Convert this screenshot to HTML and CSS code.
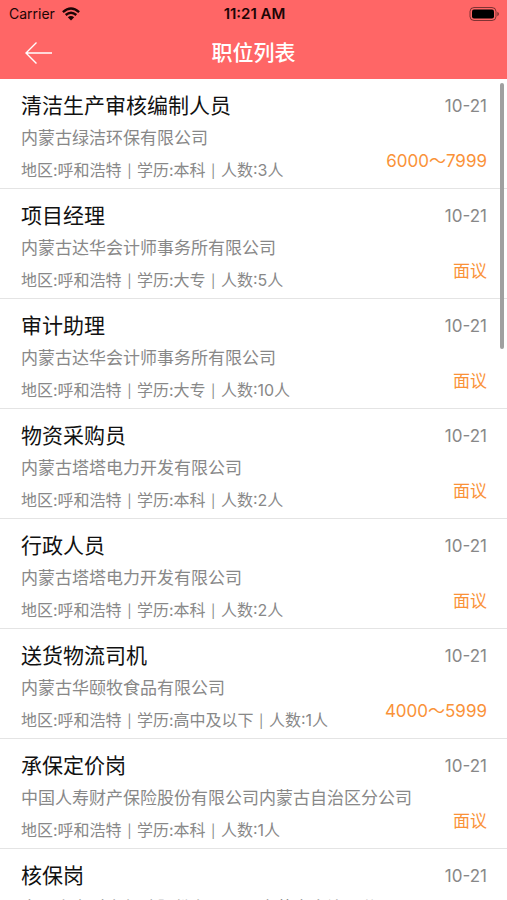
FILE: index.html
```html
<!DOCTYPE html>
<html lang="zh-CN">
<head>
<meta charset="utf-8">
<meta name="viewport" content="width=device-width, initial-scale=1">
<title>职位列表</title>
<link rel="stylesheet" href="styles.css">
</head>
<body>
<div class="screen">
  <header class="header">
    <div class="status">
      <div class="carrier">Carrier
        <svg class="wifi" viewBox="0 0 18 14" aria-hidden="true"><path d="M.9 5.1Q9-2 17.1 5.1M3.7 8Q9 3.4 14.3 8" fill="none" stroke="currentColor" stroke-width="2.4"/><path d="M5.8 10.3Q9 7.5 12.2 10.3L9 13.6Z" fill="currentColor"/></svg>
      </div>
      <div class="time">11:21 AM</div>
      <svg class="battery" viewBox="0 0 31 14" aria-hidden="true"><rect x="1" y=".5" width="26" height="13" rx="4" fill="none" stroke="currentColor" opacity=".5"/><rect x="3" y="2.5" width="22" height="9" rx="2" fill="currentColor"/><path d="M28.3 4.8Q30 5.5 30 7T28.3 9.2Z" fill="currentColor" opacity=".5"/></svg>
    </div>
    <div class="nav">
      <button class="back" type="button" aria-label="返回"><svg viewBox="0 0 28 22" aria-hidden="true"><path d="M28 11H2M12.500 .5L2 11L12.500 21.500" fill="none" stroke="currentColor" stroke-width="1.4"/></svg></button>
      <h1 class="title">职位列表</h1>
    </div>
  </header>
  <main class="list">
    <article class="job"><div class="info"><h2>清洁生产审核编制人员</h2><p class="company">内蒙古绿洁环保有限公司</p><p class="meta">地区:呼和浩特 <span class="sep">|</span> 学历:本科 <span class="sep">|</span> 人数:3人</p></div><div class="side"><time>10-21</time><span class="pay">6000～7999</span></div></article>
    <article class="job"><div class="info"><h2>项目经理</h2><p class="company">内蒙古达华会计师事务所有限公司</p><p class="meta">地区:呼和浩特 <span class="sep">|</span> 学历:大专 <span class="sep">|</span> 人数:5人</p></div><div class="side"><time>10-21</time><span class="pay">面议</span></div></article>
    <article class="job"><div class="info"><h2>审计助理</h2><p class="company">内蒙古达华会计师事务所有限公司</p><p class="meta">地区:呼和浩特 <span class="sep">|</span> 学历:大专 <span class="sep">|</span> 人数:10人</p></div><div class="side"><time>10-21</time><span class="pay">面议</span></div></article>
    <article class="job"><div class="info"><h2>物资采购员</h2><p class="company">内蒙古塔塔电力开发有限公司</p><p class="meta">地区:呼和浩特 <span class="sep">|</span> 学历:本科 <span class="sep">|</span> 人数:2人</p></div><div class="side"><time>10-21</time><span class="pay">面议</span></div></article>
    <article class="job"><div class="info"><h2>行政人员</h2><p class="company">内蒙古塔塔电力开发有限公司</p><p class="meta">地区:呼和浩特 <span class="sep">|</span> 学历:本科 <span class="sep">|</span> 人数:2人</p></div><div class="side"><time>10-21</time><span class="pay">面议</span></div></article>
    <article class="job"><div class="info"><h2>送货物流司机</h2><p class="company">内蒙古华颐牧食品有限公司</p><p class="meta">地区:呼和浩特 <span class="sep">|</span> 学历:高中及以下 <span class="sep">|</span> 人数:1人</p></div><div class="side"><time>10-21</time><span class="pay">4000～5999</span></div></article>
    <article class="job"><div class="info"><h2>承保定价岗</h2><p class="company">中国人寿财产保险股份有限公司内蒙古自治区分公司</p><p class="meta">地区:呼和浩特 <span class="sep">|</span> 学历:本科 <span class="sep">|</span> 人数:1人</p></div><div class="side"><time>10-21</time><span class="pay">面议</span></div></article>
    <article class="job"><div class="info"><h2>核保岗</h2><p class="company">中国人寿财产保险股份有限公司内蒙古自治区分公司</p><p class="meta">地区:呼和浩特 <span class="sep">|</span> 学历:本科 <span class="sep">|</span> 人数:1人</p></div><div class="side"><time>10-21</time><span class="pay">面议</span></div></article>
    <div class="scrollbar"></div>
  </main>
</div>
</body>
</html>
```
FILE: styles.css
```css
* { box-sizing: border-box; }
body, h1, h2, p { margin: 0; font-weight: 400; }
body { font-family: Inter, "Noto Sans CJK SC", sans-serif; background: #fff; color: #111; }
.screen { height: 100vh; display: flex; flex-direction: column; overflow: hidden; }
.header { flex: none; background: #ff6666; padding-bottom: 1px; }
.status { display: grid; grid-template-columns: 1fr auto 1fr; align-items: center; height: 27px; padding: 0 7px 0 9px; font-size: 14px; color: #1c0505; }
.carrier { display: flex; align-items: center; gap: 7px; }
.wifi { width: 18px; height: 14px; }
.time { font-size: 15px; font-weight: 600; }
.battery { width: 31px; height: 14px; justify-self: end; color: #000; }
.nav { display: grid; grid-template-columns: 1fr auto 1fr; align-items: center; height: 51px; padding: 0 24px; color: #fff; }
.back { width: 28px; height: 24px; padding: 0; border: 0; background: none; color: inherit; }
.back svg { display: block; width: 28px; height: 22px; }
.title { font-size: 21px; line-height: 28px; font-weight: 500; }
.list { position: relative; flex: 1; min-height: 0; overflow: hidden; }
.job { display: flex; justify-content: space-between; height: 110px; padding: 11px 20px 0 21px; border-bottom: 1px solid #e4e4e4; white-space: nowrap; }
h2 { font-size: 21px; line-height: 32px; }
.company { font-size: 17px; line-height: 33px; color: #888; }
.meta { font-size: 16px; line-height: 31px; color: #888; }
.sep { font-size: 13px; padding: 0 1px; }
.side { display: flex; flex-direction: column; align-items: flex-end; gap: 23px; font-size: 17px; line-height: 32px; }
time { color: #888; }
.pay { color: #fa9238; }
.scrollbar { position: absolute; top: 4px; right: 3px; width: 4px; height: 266px; border-radius: 2px; background: #a0a0a0; }
```
